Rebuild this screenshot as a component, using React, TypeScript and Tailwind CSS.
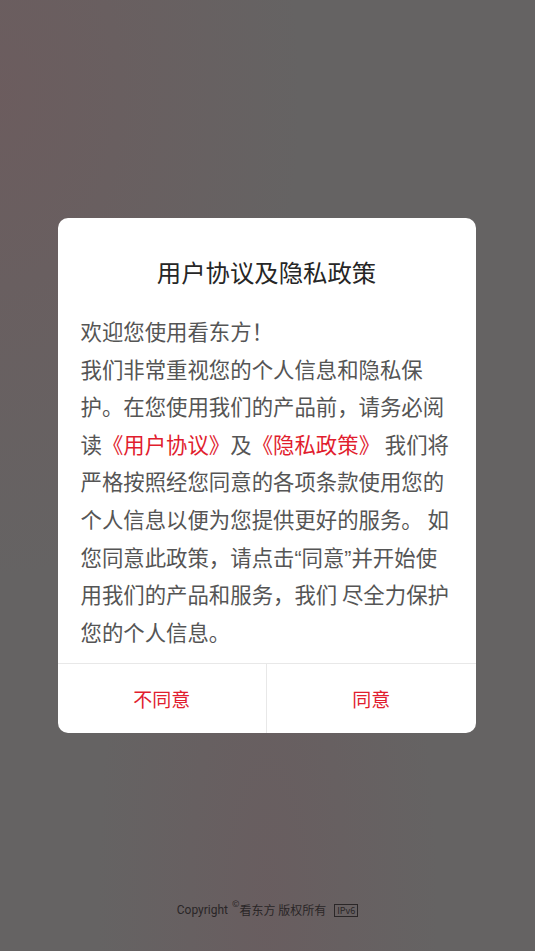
import React from "react";

const font = { fontFamily: '"Noto Sans CJK SC", "Noto Sans", sans-serif' };
const latin = { fontFamily: '"Liberation Sans", sans-serif' };

export default function App() {
  const red = "text-[#e11d2e]";
  return (
    <div
      className="relative w-[535px] h-[951px] overflow-hidden bg-[#656363] flex flex-col items-center"
      style={font}
    >
      <div className="absolute inset-0 bg-[radial-gradient(ellipse_at_0%_10%,rgba(120,80,85,0.35),transparent_40%),radial-gradient(ellipse_at_50%_95%,rgba(110,85,90,0.4),transparent_45%)]" />
      <div className="relative mt-[218px] w-[418px] -translate-x-[1px] rounded-[10px] bg-white flex flex-col">
        <div className="pt-[38px] text-center text-[24.4px] leading-[32px] text-[#262626] font-normal">
          用户协议及隐私政策
        </div>
        <div className="mt-[24px] px-[23px] pb-[13px] text-[21.4px] leading-[37.6px] text-[#555] font-normal whitespace-nowrap">
          <div>欢迎您使用看东方！</div>
          <div>我们非常重视您的个人信息和隐私保</div>
          <div>护。在您使用我们的产品前，请务必阅</div>
          <div>
            读<span className={red}>《用户协议》</span>及<span className={red}>《隐私政策》</span> 我们将
          </div>
          <div>严格按照经您同意的各项条款使用您的</div>
          <div>个人信息以便为您提供更好的服务。 如</div>
          <div className="h-[37.6px]">
            您同意此政策，请点击<span className="leading-none" style={latin}>“</span>同意<span className="leading-none" style={latin}>”</span>并开始使
          </div>
          <div>用我们的产品和服务，我们 尽全力保护</div>
          <div>您的个人信息。</div>
        </div>
        <div className="flex h-[70px] border-t border-[#e8e8e8]">
          <div className={`flex-1 flex items-center justify-center text-[19px] ${red} border-r border-[#e8e8e8]`}>
            不同意
          </div>
          <div className={`flex-1 flex items-center justify-center text-[19px] ${red}`}>
            同意
          </div>
        </div>
      </div>
      <div className="relative mt-auto mb-[33px] flex items-center text-[12px] leading-[16px] text-[#2a2627]">
        <span style={{ fontFamily: '"Roboto", "Noto Sans CJK SC", sans-serif' }}>Copyright</span>
        <span className="ml-[4px] text-[9px] leading-[9px] self-start -mt-[3px]">©</span>
        <span>看东方 版权所有</span>
        <span className="ml-[8px] border border-[#2a2627] px-[2px] text-[9px] leading-[11px]">IPv6</span>
      </div>
    </div>
  );
}
